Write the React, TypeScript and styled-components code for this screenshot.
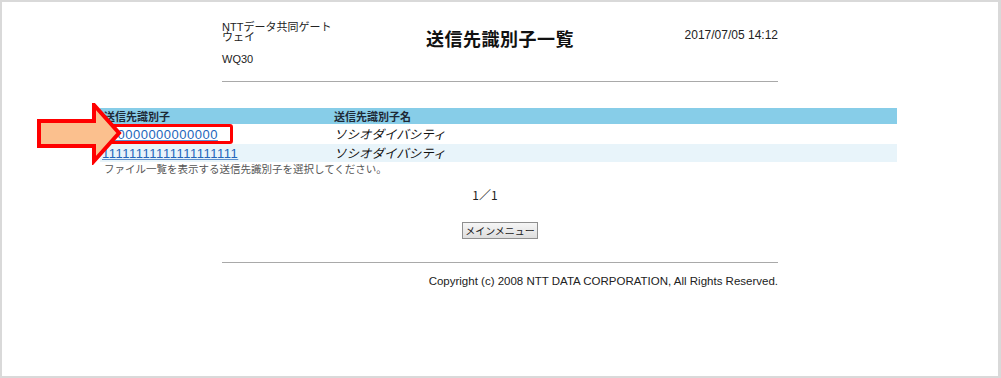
import styled, { createGlobalStyle } from 'styled-components';

const GlobalStyle = createGlobalStyle`
  html, body {
    margin: 0;
    padding: 0;
    background: #ffffff;
  }
  body {
    font-family: 'Noto Sans CJK JP', 'Liberation Sans', sans-serif;
    color: #222;
  }
`;

type IRecipient = {
  id: string;
  name: string;
};

const recipients: IRecipient[] = [
  { id: '000000000000000', name: 'ソシオダイバシティ' },
  { id: '11111111111111111111', name: 'ソシオダイバシティ' },
];

const App = () => {
  return (
    <>
      <GlobalStyle />
      <Frame>
        <Header>
          <Company>
            <div>NTTデータ共同ゲート</div>
            <div>ウェイ</div>
            <ScreenId>WQ30</ScreenId>
          </Company>
          <Title>送信先識別子一覧</Title>
          <Stamp>2017/07/05 14:12</Stamp>
        </Header>
        <Rule />

        <TableArea>
          <Table>
            <HeadRow>
              <HeadCell>送信先識別子</HeadCell>
              <HeadCell>送信先識別子名</HeadCell>
            </HeadRow>
            {recipients.map((item, i) => (
              <Row key={item.id} shaded={i % 2 === 1}>
                <Cell>
                  <IdLink href="#">{item.id}</IdLink>
                </Cell>
                <Cell>{item.name}</Cell>
              </Row>
            ))}
          </Table>
          <Hint>ファイル一覧を表示する送信先識別子を選択してください。</Hint>

          <Highlight />
          <Arrow width="86" height="62" viewBox="0 0 86 62">
            <path
              d="M2 18 L57 18 L57 2 L82 30 L57 58 L57 43 L2 43 Z"
              fill="#fbc08e"
              stroke="#ff0000"
              strokeWidth="4"
              strokeLinejoin="miter"
            />
          </Arrow>
        </TableArea>

        <Pager>1／1</Pager>
        <ButtonRow>
          <MenuButton>メインメニュー</MenuButton>
        </ButtonRow>
        <FooterRule />
        <Copyright>Copyright (c) 2008 NTT DATA CORPORATION, All Rights Reserved.</Copyright>
      </Frame>
    </>
  );
};

export default App;

/* Styles */

const Frame = styled.div`
  box-sizing: border-box;
  width: 1001px;
  height: 378px;
  border: 2px solid #d9d9d9;
  border-right-width: 3px;
  background: #fff;
  padding-top: 20px;
  overflow: hidden;
`;

const Header = styled.div`
  display: grid;
  grid-template-columns: 1fr auto 1fr;
  align-items: start;
  width: 556px;
  margin-left: 220px;
`;

const Company = styled.div`
  font-family: 'Liberation Sans', 'Noto Sans CJK JP', sans-serif;
  font-size: 11px;
  line-height: 10px;
  color: #222;
`;

const ScreenId = styled.div`
  margin-top: 12px;
`;

const Title = styled.h1`
  margin: 4px 0 0;
  font-size: 18px;
  line-height: 25px;
  font-weight: bold;
  color: #111;
  letter-spacing: 0.5px;
`;

const Stamp = styled.div`
  justify-self: end;
  margin-top: 6px;
  font-family: 'Liberation Sans', sans-serif;
  font-size: 12px;
  line-height: 14px;
  color: #222;
`;

const Rule = styled.div`
  width: 556px;
  margin: 17px 0 0 220px;
  border-top: 1px solid #a9a9a9;
`;

const TableArea = styled.div`
  position: relative;
  margin-top: 26px;
`;

const Table = styled.div`
  width: 797px;
  margin-left: 98px;
`;

const HeadRow = styled.div`
  display: grid;
  grid-template-columns: 230px 1fr;
  height: 16px;
  background: #87cde8;
`;

const HeadCell = styled.div`
  padding-left: 4px;
  font-size: 11px;
  line-height: 16px;
  font-weight: bold;
  color: #1e2a36;
`;

const Row = styled.div<{ shaded: boolean }>`
  display: grid;
  grid-template-columns: 230px 1fr;
  height: 18px;
  margin-top: 1px;
  background: ${p => (p.shaded ? '#e8f4fa' : '#ffffff')};
`;

const Cell = styled.div`
  padding-left: 4px;
  font-size: 12.5px;
  line-height: 18px;
  color: #111;
  font-style: italic;
`;

const IdLink = styled.a`
  display: inline-block;
  margin-left: -2px;
  font-style: normal;
  font-family: 'Liberation Sans', sans-serif;
  font-size: 13px;
  letter-spacing: 0.5px;
  color: #2266bb;
  text-decoration: underline;
  text-decoration-color: #5d8fcc;
`;

const Hint = styled.div`
  margin-left: 102px;
  font-size: 10.5px;
  line-height: 14px;
  color: #555;
`;

const Highlight = styled.div`
  position: absolute;
  left: 101px;
  top: 16px;
  width: 124px;
  height: 14px;
  border: 3px solid #ff0000;
  border-radius: 3px;
`;

const Arrow = styled.svg`
  position: absolute;
  left: 35px;
  top: -5px;
`;

const Pager = styled.div`
  margin-top: 11px;
  padding-right: 30px;
  text-align: center;
  font-size: 12px;
  line-height: 16px;
  color: #222;
`;

const ButtonRow = styled.div`
  display: flex;
  justify-content: center;
  margin-top: 19px;
`;

const MenuButton = styled.button`
  width: 76px;
  height: 17px;
  padding: 0;
  border: 1px solid #8f8f8f;
  border-radius: 0;
  background: linear-gradient(#f6f6f6, #dedede);
  font-family: 'Noto Sans CJK JP', sans-serif;
  font-size: 10px;
  line-height: 15px;
  color: #222;
`;

const FooterRule = styled.div`
  width: 556px;
  margin: 23px 0 0 220px;
  border-top: 1px solid #a9a9a9;
`;

const Copyright = styled.div`
  width: 556px;
  margin: 11px 0 0 220px;
  text-align: right;
  font-family: 'Liberation Sans', sans-serif;
  font-size: 11.5px;
  line-height: 14px;
  color: #222;
`;
